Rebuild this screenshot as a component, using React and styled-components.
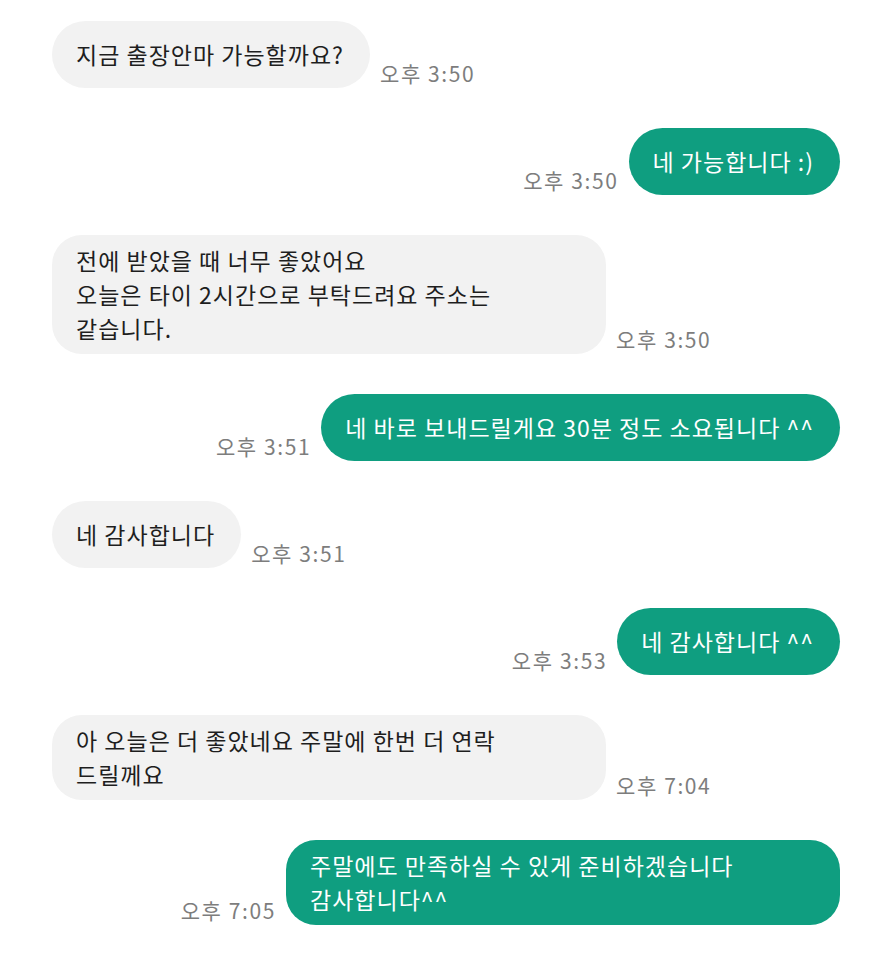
import React from "react";
import styled, {createGlobalStyle} from "styled-components";

const GlobalStyle = createGlobalStyle`
  html, body {
    margin: 0;
    padding: 0;
    background: #ffffff;
  }
  body {
    font-family: "Noto Sans CJK KR", "Noto Sans", sans-serif;
    -webkit-font-smoothing: antialiased;
  }
`;

const Chat = styled.div`
  display: flex;
  flex-direction: column;
  gap: 40px;
  width: 883px;
  box-sizing: border-box;
  padding: 21px 43px 0 52px;
`;

const Row = styled.div`
  display: flex;
  align-items: flex-end;
  justify-content: ${({$mine}) => ($mine ? "flex-end" : "flex-start")};
  gap: 10px;
`;

const Bubble = styled.div`
  box-sizing: border-box;
  width: ${({$multi}) => ($multi ? "554px" : "auto")};
  min-height: 67px;
  display: flex;
  align-items: center;
  padding: 8px 26px 9px 24px;
  border-radius: ${({$multi}) => ($multi ? "30px" : "34px")};
  background: ${({$mine}) => ($mine ? "#0f9e80" : "#f2f2f2")};
  color: ${({$mine}) => ($mine ? "#ffffff" : "#1e1e1e")};
  font-size: 23px;
  line-height: 34px;
  letter-spacing: 1px;
  white-space: nowrap;
`;

const Time = styled.span`
  flex-shrink: 0;
  color: #7d7d7d;
  font-size: 21px;
  line-height: 20px;
  letter-spacing: 1.6px;
  padding-bottom: 5px;
  white-space: nowrap;
`;

const messages = [
    {mine: false, time: "오후 3:50", lines: ["지금 출장안마 가능할까요?"]},
    {mine: true, time: "오후 3:50", lines: ["네 가능합니다 :)"]},
    {
        mine: false,
        time: "오후 3:50",
        lines: ["전에 받았을 때 너무 좋았어요", "오늘은 타이 2시간으로 부탁드려요 주소는", "같습니다."]
    },
    {mine: true, time: "오후 3:51", lines: ["네 바로 보내드릴게요 30분 정도 소요됩니다 ^^"]},
    {mine: false, time: "오후 3:51", lines: ["네 감사합니다"]},
    {mine: true, time: "오후 3:53", lines: ["네 감사합니다 ^^"]},
    {mine: false, time: "오후 7:04", lines: ["아 오늘은 더 좋았네요 주말에 한번 더 연락", "드릴께요"]},
    {mine: true, time: "오후 7:05", lines: ["주말에도 만족하실 수 있게 준비하겠습니다", "감사합니다^^"]}
];

const Message = ({mine, time, lines}) => {
    const multi = lines.length > 1;
    const bubble = (
        <Bubble $mine={mine} $multi={multi}>
            <div>
                {lines.map((line, i) => (
                    <div key={i}>{line}</div>
                ))}
            </div>
        </Bubble>
    );
    return (
        <Row $mine={mine}>
            {mine && <Time>{time}</Time>}
            {bubble}
            {!mine && <Time>{time}</Time>}
        </Row>
    );
};

const App = () => {
    return (
        <>
            <GlobalStyle/>
            <Chat>
                {messages.map((m, i) => (
                    <Message key={i} {...m}/>
                ))}
            </Chat>
        </>
    );
};

export default App;
